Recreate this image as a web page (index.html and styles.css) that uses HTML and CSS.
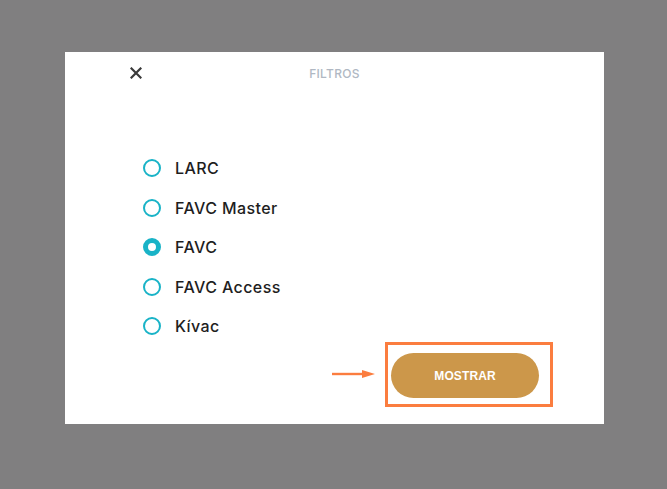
FILE: index.html
```html
<!DOCTYPE html>
<html lang="es">
<head>
<meta charset="utf-8">
<title>Filtros</title>
<link rel="stylesheet" href="styles.css">
</head>
<body>
<div class="backdrop">
  <div class="modal">
    <div class="modal-header">
      <button class="close" aria-label="Cerrar">
        <svg width="12" height="12" viewBox="0 0 12 12"><path d="M1.5 1.5 L10.5 10.5 M10.5 1.5 L1.5 10.5" stroke="#3a3a3a" stroke-width="2.2" stroke-linecap="square"/></svg>
      </button>
      <h2 class="title">FILTROS</h2>
    </div>
    <ul class="options">
      <li class="option"><span class="radio"></span><span class="label">LARC</span></li>
      <li class="option"><span class="radio"></span><span class="label">FAVC Master</span></li>
      <li class="option"><span class="radio checked"></span><span class="label">FAVC</span></li>
      <li class="option"><span class="radio"></span><span class="label">FAVC Access</span></li>
      <li class="option"><span class="radio"></span><span class="label">Kívac</span></li>
    </ul>
    <div class="footer">
      <svg class="arrow" width="44" height="10" viewBox="0 0 44 10"><path d="M0 5 L32 5" stroke="#fb7d3f" stroke-width="2.4"/><path d="M30 1 L43 5 L30 9 Z" fill="#fb7d3f"/></svg>
      <div class="highlight">
        <button class="show">MOSTRAR</button>
      </div>
    </div>
  </div>
</div>
</body>
</html>
```
FILE: styles.css
```css
html, body {
  margin: 0;
  padding: 0;
  background: #807f80;
  width: 667px;
  height: 489px;
  overflow: hidden;
}
.backdrop {
  padding: 52px 0 0 65px;
}
.modal {
  width: 539px;
  height: 372px;
  background: #fff;
  box-sizing: border-box;
  display: flex;
  flex-direction: column;
  font-family: Inter, "Open Sans", "Liberation Sans", sans-serif;
  position: relative;
}
.modal-header {
  display: flex;
  align-items: center;
  height: 42px;
  position: relative;
}
.close {
  border: 0;
  background: none;
  padding: 0;
  margin-left: 65px;
  width: 12px;
  height: 12px;
  display: flex;
  cursor: pointer;
}
.title {
  position: absolute;
  left: 0;
  right: 0;
  top: 14px;
  margin: 0;
  text-align: center;
  font-size: 12px;
  font-weight: 500;
  color: #b0b8c3;
  letter-spacing: 0.3px;
  line-height: 16px;
  pointer-events: none;
}
.options {
  list-style: none;
  margin: 62px 0 0 78px;
  padding: 0;
  display: flex;
  flex-direction: column;
  gap: 15.5px;
}
.option {
  display: flex;
  align-items: center;
  height: 24px;
  gap: 14px;
}
.radio {
  width: 18px;
  height: 18px;
  box-sizing: border-box;
  border: 2px solid #19b3c7;
  border-radius: 50%;
  flex: none;
}
.radio.checked {
  border-width: 5.5px;
}
.label {
  font-size: 16px;
  font-weight: 500;
  color: #1e1e1e;
  letter-spacing: 0.4px;
}
.footer {
  display: flex;
  align-items: center;
  justify-content: flex-end;
  margin-top: auto;
  margin-right: 51px;
  margin-bottom: 17px;
  gap: 9px;
}
.arrow {
  display: block;
  margin-top: -2px;
}
.highlight {
  border: 3px solid #fb7d3f;
  padding: 8px 11px 6px 3px;
}
.show {
  display: block;
  width: 148px;
  height: 45px;
  border: 0;
  border-radius: 23px;
  background: #cc974a;
  color: #fff;
  font-family: "Liberation Sans", Arial, sans-serif;
  font-weight: 700;
  font-size: 12px;
  letter-spacing: 0.1px;
  cursor: pointer;
}
```
